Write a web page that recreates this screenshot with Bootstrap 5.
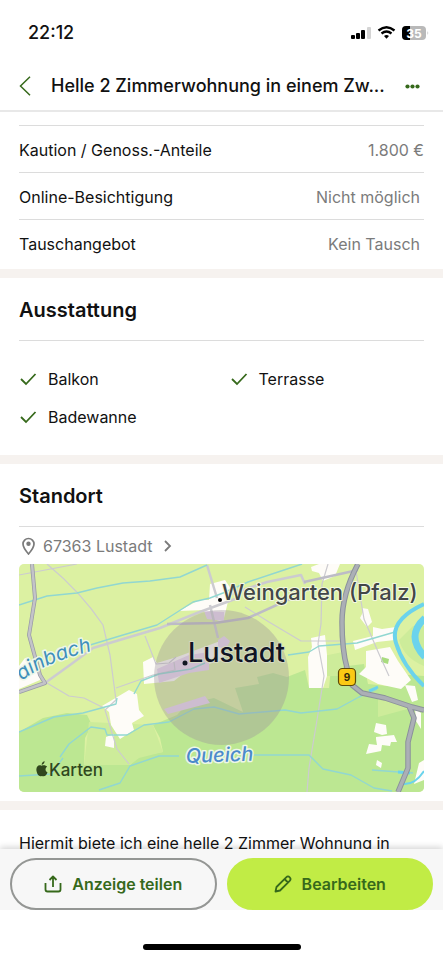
<!DOCTYPE html>
<html lang="de">
<head>
<meta charset="utf-8">
<meta name="viewport" content="width=device-width, initial-scale=1">
<title>Helle 2 Zimmerwohnung</title>
<link href="https://cdn.jsdelivr.net/npm/bootstrap@5.3.0/dist/css/bootstrap.min.css" rel="stylesheet">
<style>
  body { font-family: Inter, "Liberation Sans", sans-serif; font-size: 16px; line-height: 24px; color: #111; }
  svg { flex: none; }
  .statusbar { height: 60px; padding: 5px 14px 0 28px; }
  .clock { font-size: 18px; font-weight: 500; }
  .topbar { height: 52px; padding: 2px 24px 0 19px; border-bottom: 2px solid #e8e8e8; gap: 20px; }
  .topbar h1 { font-size: 18px; line-height: 26px; font-weight: 500; }
  .green { color: #36691b; }
  .scroller { scrollbar-width: none; min-height: 0; padding-top: 13px; }
  .scroller::-webkit-scrollbar { display: none; }
  .inset { margin: 0 19px; }
  .facts { padding-bottom: 3px; }
  .facts > div { border-top: 1px solid #dcdcdc; height: 47px; padding-top: 2px; }
  .facts dt { font-weight: 400; }
  .soft { color: #7b7b7b; }
  .facts .padded { padding-right: 4px; }
  .divider { height: 9px; background: #f6f2ef; }
  .heading { font-size: 20px; line-height: 26px; font-weight: 600; padding: 19px 0 17px; margin: 0; border-bottom: 1px solid #dcdcdc; }
  .features { padding: 19px 0; }
  .features li { height: 38px; gap: 11px; }
  .place { height: 37px; gap: 6px; }
  .place svg:last-child { margin-left: 4px; }
  .location { padding-bottom: 9px; }
  .summary { padding: 21px 0 48px; }
  .map { border-radius: 5px; height: auto; }
  .map text { font-family: Inter, "Liberation Sans", sans-serif; paint-order: stroke; stroke-linejoin: round; }
  .actions { background: #f7f7f7; padding: 9px 10px 0; box-shadow: 0 -2px 6px rgba(0,0,0,.16); z-index: 2; gap: 10px; }
  .actions .btn { height: 52px; font-size: 16px; font-weight: 600; color: #36691b; gap: 10px; border: 2px solid #c1ec45; background: #c1ec45; }
  .actions .share { border-color: #949694; background: transparent; }
  .homezone { height: 50px; z-index: 3; padding-top: 16px; }
  .homebar { width: 158px; height: 6px; background: #000; margin-top: 18px; }
</style>
<script src="https://cdn.jsdelivr.net/npm/bootstrap@5.3.0/dist/js/bootstrap.bundle.min.js"></script>
</head>
<body class="vh-100 d-flex flex-column bg-white overflow-hidden">
<div class="statusbar d-flex align-items-center justify-content-between flex-shrink-0">
  <span class="clock">22:12</span>
  <svg width="78" height="16" viewBox="0 0 78 16" role="img" aria-label="Mobilfunk, WLAN, Akku 35 Prozent">
    <rect x="0" y="10" width="4" height="4" rx="1"/><rect x="5" y="8" width="4" height="6" rx="1"/><rect x="10" y="5" width="4" height="9" rx="1"/><rect x="16" y="2" width="4" height="12" rx="1" fill="#d4d4d4"/>
    <path d="M27.500 5.500q8-6.500 16 0M30.500 8.500q5-4 10 0" fill="none" stroke="#000" stroke-width="2.300"/><path d="M33 11q2.500-2.200 5 0l-2.500 2.700z"/>
    <rect x="51" y="1" width="24" height="14" rx="4" fill="#b9b9b9"/><path d="M59 1h-4a4 4 0 0 0-4 4v6a4 4 0 0 0 4 4h4z"/><path d="M76.500 6q1.500 2 0 4z" fill="#b9b9b9"/>
    <text x="63" y="12.500" text-anchor="middle" font-size="12" font-weight="700" fill="#fff">35</text>
  </svg>
</div>
<header class="topbar d-flex align-items-center flex-shrink-0">
  <button type="button" class="btn p-0 border-0 d-flex green" aria-label="Zurück"><svg width="12" height="20" viewBox="0 0 12 20" fill="none" stroke="currentColor" stroke-width="1.500"><path d="M11 .8 1.500 10 11 19.200"/></svg></button>
  <h1 class="m-0 flex-grow-1 text-nowrap">Helle 2 Zimmerwohnung in einem Zw...</h1>
  <button type="button" class="btn p-0 border-0 d-flex green" aria-label="Mehr"><svg width="15" height="5" viewBox="0 0 15 5" fill="currentColor"><circle cx="2.500" cy="2.500" r="2.100"/><circle cx="7.500" cy="2.500" r="2.100"/><circle cx="12.500" cy="2.500" r="2.100"/></svg></button>
</header>
<main class="scroller flex-grow-1 overflow-auto">
  <dl class="facts inset">
    <div class="d-flex justify-content-between align-items-center"><dt>Kaution / Genoss.-Anteile</dt><dd class="soft m-0">1.800 €</dd></div>
    <div class="d-flex justify-content-between align-items-center"><dt>Online-Besichtigung</dt><dd class="soft padded m-0">Nicht möglich</dd></div>
    <div class="d-flex justify-content-between align-items-center"><dt>Tauschangebot</dt><dd class="soft padded m-0">Kein Tausch</dd></div>
  </dl>
  <div class="divider"></div>
  <section class="inset">
    <h2 class="heading">Ausstattung</h2>
    <ul class="features list-unstyled row g-0 m-0">
      <li class="col-6 d-flex align-items-center"><svg width="18" height="18" viewBox="0 0 18 18" fill="none" stroke="#36691b" stroke-width="1.800"><path d="m2 9 5 5 9.500-10"/></svg>Balkon</li>
      <li class="col-6 d-flex align-items-center ps-2"><svg width="18" height="18" viewBox="0 0 18 18" fill="none" stroke="#36691b" stroke-width="1.800"><path d="m2 9 5 5 9.500-10"/></svg>Terrasse</li>
      <li class="col-6 d-flex align-items-center"><svg width="18" height="18" viewBox="0 0 18 18" fill="none" stroke="#36691b" stroke-width="1.800"><path d="m2 9 5 5 9.500-10"/></svg>Badewanne</li>
    </ul>
  </section>
  <div class="divider"></div>
  <section class="location inset">
    <h2 class="heading">Standort</h2>
    <a href="#karte" class="place soft d-flex align-items-center text-decoration-none">
      <svg width="18" height="18" viewBox="0 0 18 18" fill="none" stroke="currentColor" stroke-width="1.700"><path d="M9.500 17C6.500 13.500 4 10.500 4 7a5.500 5.500 0 0 1 11 0c0 3.500-2.500 6.500-5.500 10z"/><circle cx="9.500" cy="6.800" r="2.200" fill="currentColor" stroke="none"/></svg>
      67363 Lustadt
      <svg width="12" height="14" viewBox="0 0 12 14" fill="none" stroke="currentColor" stroke-width="1.800"><path d="m3 2 5 5-5 5"/></svg>
    </a>
    <svg id="karte" class="map d-block w-100" viewBox="0 0 405 228" role="img" aria-label="Karte von Lustadt">
      <rect width="405" height="228" fill="#dcf1a2"/>
      <path fill="#bce792" d="M0 168 24 154 48 149 68 151 73 161 66 174 65 201 98 199 111 201 120 192 144 188 141 174 134 161 158 151 168 140 195 134 224 148 216 124 240 120 238 113 254 109 268 113 286 106 290 124 310 124 312 104 345 100 349 120 368 122 376 110 405 112V228H0z"/>
      <path fill="#cdec9a" d="m70 158 64 3 10 27-24 6-9 7-46 0zM304 92l20-4v24h-18zM359 134l33 10-33 9zM380 76l14-14 11 0v40q-20-8-25-26z"/>
      <g fill="#fefcf8">
        <path d="M0 102 6 94 20 100 21 116 0 125zM160 47 180 36 190 36 191 20 206 16 212 25 206 50 204 58 188 53 185 46z"/>
        <path d="m124 98 10-5 4 6 20-6 46-17 1 20-35 9-15 12-30 3zM83 142l27-16 8 4 2 16 5 6-12 7 2 7-14 9-9-14-2-13zM87 173l8-3v14l-9-2z"/>
        <path d="m292 3 8-3h21l-5 12-12 5-4-8-7-2zM343 44l6 1 4 13-5 5-7-9 3-6zM292 74l14-3 2 20v21l-4 12h-14l-1-31 4-10zM334 77l20-5v-9l9 2 14-2-1 13-18 2-22 8zM347 87l24-4 8 14 13 19-10 9-23-5-19-10 7-7zM386 121l10 1 3 14-6 2zM396 145l6 4v16l-5-8z"/>
        <path d="m357 159 10 2 1 9-5 1-8-3zM357 173l18-2 3 7-6 0-1 4-8-1-1 6-15 3 3-10 8 1-1-6zM358 196l5 3-1 5-5-3zM400 199l5-3v20l-10 4z"/>
      </g>
      <path fill="#e9d6ee" d="m185 47 20 1v9l-17-2zM138 105l32-14 20-3 0 18-20 3-30 10zM199 76l6-4 6 5-4 8-8-2zM145 145l41-13 5 7-42 11z"/>
      <path fill="#a9dc7e" d="m363 93 7 2-1 5-7-2z"/>
      <g fill="none" stroke="#cccbd0" stroke-width="1.200" stroke-linejoin="round">
        <path d="M0 11 58 0M28 0Q62 28 84 61L91 91 97 136 86 146 98 185 110 200M28 119 50 132 65 134 85 144M97 124 134 111 156 106 155 98M126 72 137 100 150 99 157 93M226 43 250 58 282 77 325 77M309 0 303 20 302 60 299 80 305 112 298 156 290 204 288 228M337 7 345 55 360 90 370 112"/>
        <path stroke-width="2.500" d="M188 1 198 34M191 41 199 74M26 119 51 101 74 84 104 75 141 64 178 49 216 35M212 30 248 18 282 11 286 20"/>
      </g>
      <g fill="none" stroke="#91d7d1" stroke-width="1.400" stroke-linejoin="round">
        <path d="M0 41 28 32 58 29 78 24 104 19 131 17 161 13 188 1M71 81 104 71 138 61 174 38 191 34 204 29 229 18 259 8 283 0"/>
        <path d="M0 168 35 153 64 149 97 140 98 134M115 130 122 117 140 110 172 105 186 99M41 193 50 180 72 163 86 165 88 171 108 171 125 161 150 158 175 145 195 143 220 150 266 146 282 149 318 145 340 133 358 125M269 91 290 88 300 82 338 79 376 68"/>
        <path d="M80 226 101 219 111 202 140 192 160 192M234 191 290 191 304 205 332 211 355 224 373 227M0 212 32 210 44 194M353 206 380 208 394 209"/>
      </g>
      <g fill="none" stroke="#6bd3ec">
        <path stroke-width="4" d="M405 40Q370 56 377 79T405 122"/><path stroke-width="7" d="M406 54Q386 72 406 93"/><path stroke-width="3" d="M350 127 359 123M379 208l12 1"/><path stroke-width="2" d="M384 220q12 1 21-13"/>
      </g>
      <g fill="none" stroke-linejoin="round">
        <path stroke="#999ba6" stroke-width="4" d="M13 0 16 34 10 71 21 111 26 119 0 128"/><path stroke="#c3c3c9" stroke-width="2.500" d="M13 0 16 34 10 71 21 111 26 119 0 128"/>
        <path stroke="#bdbcc6" stroke-width="2.500" d="M148 60 196 59 229 54 273 34M285 18 339 6"/>
        <path stroke="#8b919b" stroke-width="5.500" d="M339 0Q323 30 323 58T328 104L333 121 343 129 366 134 393 143 405 146M390 142 395 154 389 178 389 204 379 228"/>
        <path stroke="#abafb6" stroke-width="3.500" d="M339 0Q323 30 323 58T328 104L333 121 343 129 366 134 393 143 405 146M390 142 395 154 389 178 389 204 379 228"/>
      </g>
      <circle cx="202.500" cy="113.500" r="67.500" fill="#9a8f9c" opacity=".36"/>
      <circle cx="201" cy="36" r="2"/><circle cx="166" cy="99" r="2.500" fill="#111522"/>
      <text x="203" y="36" font-size="22" font-weight="500" fill="#424747" stroke="#f3f8e3" stroke-width="2">Weingarten (Pfalz)</text>
      <text x="169" y="98" font-size="27" font-weight="500" fill="#101424" stroke="#d5dac4" stroke-width="2">Lustadt</text>
      <text x="167" y="199" font-size="20" font-style="italic" font-weight="500" fill="#4b8acb" stroke="#edf7e8" stroke-width="3" transform="rotate(-2 167 199)">Queich</text>
      <path id="creek" d="M3 117Q28 96 90 83" fill="none"/>
      <text font-size="20" font-style="italic" font-weight="400" fill="#3f8fbb" stroke="#edf7e8" stroke-width="3"><textPath href="#creek">ainbach</textPath></text>
      <rect x="319.500" y="104.500" width="17" height="17" rx="4" fill="#fbc914" stroke="#5c4a08" stroke-width="1.200"/>
      <text x="328" y="117" text-anchor="middle" font-size="10" font-weight="700" fill="#33290a">9</text>
      <path fill="#30471d" d="M25.500 197q.3 3-2.800 4-.2-3 2.800-4zM17.500 207c-.8-4.500 2-6.800 5-5.300 2.300-1 4.500-.4 5.600 1-2.300 1.600-2 4.600.4 5.700-1 3-3 4.700-5.700 3.500-2.700 1.200-4.700-1.400-5.300-4.900z"/>
      <text x="30" y="212" font-size="17" font-weight="500" fill="#30471d">Karten</text>
    </svg>
  </section>
  <div class="divider"></div>
  <p class="summary inset">Hiermit biete ich eine helle 2 Zimmer Wohnung in</p>
</main>
<footer class="flex-shrink-0">
  <div class="actions d-flex position-relative">
    <button type="button" class="btn share rounded-pill flex-fill w-50 p-0 d-flex align-items-center justify-content-center"><svg width="18" height="18" viewBox="0 0 18 18" fill="none" stroke="currentColor" stroke-width="1.800" stroke-linejoin="round"><path d="M9 12V2M5.500 5 9 1.500 12.500 5M1.500 8v6.500q0 2 2 2h11q2 0 2-2V8"/></svg>Anzeige teilen</button>
    <button type="button" class="btn rounded-pill flex-fill w-50 p-0 d-flex align-items-center justify-content-center"><svg width="18" height="18" viewBox="0 0 18 18" fill="none" stroke="currentColor" stroke-width="1.800" stroke-linejoin="round"><path d="M1.500 16.500 2.500 12 12.200 2.300q1.800-1.800 3.500 0t0 3.500L6 15.500zM10.500 4l3.500 3.500"/></svg>Bearbeiten</button>
  </div>
  <div class="homezone position-relative bg-white d-flex justify-content-center"><div class="homebar rounded-pill"></div></div>
</footer>
</body>
</html>
